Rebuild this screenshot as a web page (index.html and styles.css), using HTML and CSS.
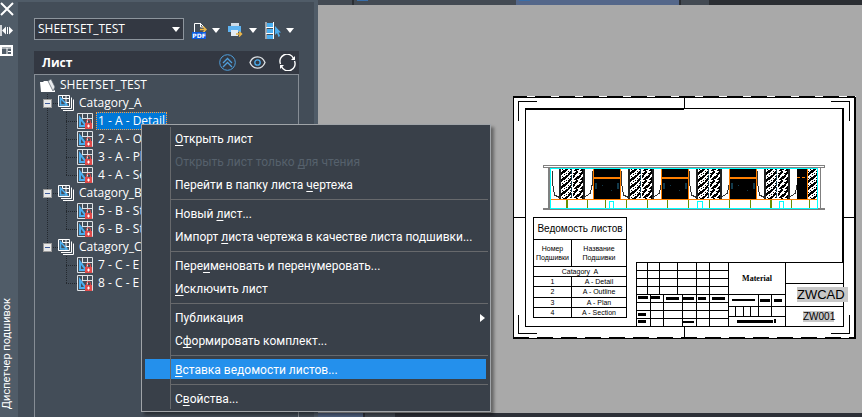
FILE: index.html
```html
<!DOCTYPE html>
<html lang="ru">
<head>
<meta charset="utf-8">
<title>Диспетчер подшивок</title>
<link rel="stylesheet" href="styles.css">
</head>
<body>
<svg class="defs" width="0" height="0" aria-hidden="true">
  <defs>
    <symbol id="i-sheet" viewBox="0 0 16 16">
      <path d="M.5.5h15v15H.5zM5.500.5v6M10.500.5v9M4 5.500h11.500" fill="none" stroke="#dfe3e6"/>
      <path d="M1 1h3l1 5 4 5v4H1z" fill="#434d58"/>
      <path d="M2 2l9 12H2zM4 8v4h3z" fill="#4aaef0" fill-rule="evenodd"/>
      <path d="M9.500 10V8.500a2 2 0 0 1 4 0V10" fill="none" stroke="#e04a4a"/>
      <path d="M8 10h7v6H8z" fill="#e04a4a"/>
      <path d="M11 11.500h1v3h-1zM10 12.500h3v1h-3z" fill="#fff"/>
    </symbol>
    <symbol id="i-group" viewBox="0 0 16 16">
      <path d="M.5.5h11v11H.5z" fill="none" stroke="#fff"/>
      <path d="M4.500.5v3h7M8 1v10M5 3.500h7M7 7.500h5" fill="none" stroke="#fff"/>
      <path d="M2.500 3v7h6.500z" fill="#434d58" stroke="#4aaef0" stroke-width="1.500"/>
      <path d="M13.500 2.500v11H3M15.500 4.500v11H5" fill="none" stroke="#fff"/>
    </symbol>
  </defs>
</svg>
<div class="app">
  <aside class="rail">
    <button aria-label="Закрыть"><svg width="14" height="14" viewBox="0 0 14 14"><path d="M1 1l12 12M13 1L1 13" stroke="#fff" stroke-width="2"/></svg></button>
    <button aria-label="Скрывать"><svg width="13" height="11" viewBox="0 0 13 11"><path d="M1 0v11" stroke="#fff" stroke-width="1.500"/><path d="M2 5.500l4-4v8zM13 5.500l-4-4v8z" fill="#fff"/><path d="M7.500 2v7" stroke="#fff"/></svg></button>
    <button aria-label="Свойства палитры"><svg width="13" height="11" viewBox="0 0 13 11"><path d="M1 1h11v9H1z" fill="none" stroke="#fff" stroke-width="2"/><path d="M2 3h9M7 3v7M8 6.500h4" stroke="#fff"/></svg></button>
    <span class="rail-title">Диспетчер подшивок</span>
  </aside>
  <section class="panel">
    <div class="toolbar">
      <label class="combo"><select aria-label="Подшивка"><option>SHEETSET_TEST</option></select><i class="caret"></i></label>
      <button aria-label="PDF"><svg width="15" height="17" viewBox="0 0 15 17"><path d="M2.500 10V1.500h6L12 5v1M8.500 1v4H12M12.500 9v2" fill="none" stroke="#fff"/><path d="M8 7.500h5M11 4.500l3 3-3 3" fill="none" stroke="#e8b54a" stroke-width="1.500"/><path d="M0 10h14v7H0z" fill="#0a5ae0"/><text x="7" y="16" text-anchor="middle" class="pdf">PDF</text></svg><i class="caret"></i></button>
      <button aria-label="Печать"><svg width="16" height="16" viewBox="0 0 16 16"><path d="M3 1h8v4H3z" fill="#cfdbe6"/><path d="M0 4h13v6H0z" fill="#5fb4f2"/><path d="M3 8h7v6H3z" fill="#e3ebf2"/><path d="M8 12h5M11 9.500l2.500 2.500L11 14.500" fill="none" stroke="#e8b54a" stroke-width="1.500"/></svg><i class="caret"></i></button>
      <button aria-label="Выбор листов"><svg width="16" height="17" viewBox="0 0 16 17"><path d="M2 1h6v4H2zM2 7h6v4H2zM2 13h6v4H2z" fill="#4aaef0"/><path d="M1 0v17M8.500 0v17M1 5.500h8M1 11.500h8" stroke="#fff"/><path d="M10 4v9l2-2 1.500 4 1.500-1-1.500-3.500H16z" fill="#4aaef0"/></svg><i class="caret"></i></button>
    </div>
    <header class="head">
      <h1>Лист</h1>
      <button aria-label="Свернуть"><svg width="17" height="17" viewBox="0 0 17 17"><g fill="none" stroke="#4f9fdc"><circle cx="8.500" cy="8.500" r="7.800"/><path d="M4 9l4.500-4.500L13 9M4 13l4.500-4.500L13 13" stroke-width="1.300"/></g></svg></button>
      <button aria-label="Просмотр"><svg width="17" height="13" viewBox="0 0 17 13"><path d="M1 6.500C4-1 13-1 16 6.500 13 14 4 14 1 6.500z" fill="none" stroke="#dfe3e6" stroke-width="1.300"/><circle cx="8.500" cy="6.500" r="2.700" fill="none" stroke="#4aaef0" stroke-width="1.300"/></svg></button>
      <button aria-label="Обновить"><svg width="17" height="17" viewBox="0 0 17 17"><path d="M1.500 10A7 7 0 0 1 14.500 4.500M15.500 7A7 7 0 0 1 2.500 12.500" fill="none" stroke="#fff" stroke-width="1.400"/><path d="M16 2v4h-4zM1 15v-4h4z" fill="#fff"/></svg></button>
    </header>
    <div class="tree">
      <div class="row root"><svg width="15" height="13" viewBox="0 0 15 13"><path d="M0 3h3l1-1h5l6 10v1H1z" fill="#fff"/><path d="M8 2l3-2 4 8-2 4z" fill="#e8eaec" stroke="#555f69" stroke-width=".7"/></svg><span>SHEETSET_TEST</span></div>
      <ul class="groups">
        <li class="group">
          <div class="row"><button class="toggle" aria-label="Свернуть группу"></button><svg class="gi"><use href="#i-group"/></svg><span>Catagory_A</span></div>
          <ul class="sheets">
            <li class="row"><svg class="si"><use href="#i-sheet"/></svg><span class="selected">1 - A - Detail</span></li>
            <li class="row"><svg class="si"><use href="#i-sheet"/></svg><span>2 - A - Outline</span></li>
            <li class="row"><svg class="si"><use href="#i-sheet"/></svg><span>3 - A - Plan</span></li>
            <li class="row"><svg class="si"><use href="#i-sheet"/></svg><span>4 - A - Section</span></li>
          </ul>
        </li>
        <li class="group">
          <div class="row"><button class="toggle" aria-label="Свернуть группу"></button><svg class="gi"><use href="#i-group"/></svg><span>Catagory_B</span></div>
          <ul class="sheets">
            <li class="row"><svg class="si"><use href="#i-sheet"/></svg><span>5 - B - St</span></li>
            <li class="row"><svg class="si"><use href="#i-sheet"/></svg><span>6 - B - St</span></li>
          </ul>
        </li>
        <li class="group">
          <div class="row"><button class="toggle" aria-label="Свернуть группу"></button><svg class="gi"><use href="#i-group"/></svg><span>Catagory_C</span></div>
          <ul class="sheets">
            <li class="row"><svg class="si"><use href="#i-sheet"/></svg><span>7 - C - E</span></li>
            <li class="row"><svg class="si"><use href="#i-sheet"/></svg><span>8 - C - E</span></li>
          </ul>
        </li>
      </ul>
    </div>
  </section>
  <main class="work">
    <div class="tabs"><i class="tab first"></i><i class="tab doc"></i><i class="tab doc active"></i><i class="tab add"></i></div>
    <div class="canvas">
      <div class="sheet">
        <svg class="drawing" viewBox="513 96 343 243" shape-rendering="crispEdges">
          <defs>
            <pattern id="hatch" width="8" height="7" patternUnits="userSpaceOnUse">
              <path d="M-1 8L9-1M-5 4L3-3M5 11L13 4" stroke="#000" stroke-width="2.200"/>
              <path d="M0 3h1v1H0zM4 6h1v1H4zM6 5h1v1H6zM2 1h1v1H2z" fill="#000"/>
            </pattern>
            <pattern id="hatch2" width="6" height="9" patternUnits="userSpaceOnUse">
              <path d="M-1 8L7-1M-2 14L10 2" stroke="#000" stroke-width="2"/>
              <path d="M1 2h2v1H1zM4 8h1v1H4z" fill="#000"/>
            </pattern>
            <g id="panel">
              <path d="M0 169h11v30H0z" fill="url(#hatch)"/><path d="M13 169h10v30H13z" fill="url(#hatch2)"/>
              <path d="M0 169v30M24 169v30" stroke="#222" stroke-width="2"/>
              <path d="M11.500 169v30" stroke="#123a4c" stroke-dasharray="5 1"/>
              <path d="M-7.500 171v12l2 12 6 3M32.500 171v12l-2 10-7 5" fill="none" stroke="#333"/>
            </g>
            <g id="door">
              <path d="M0 169h27v30H0z"/>
              <path d="M0 178h27" stroke="#ff7f00" stroke-width="2"/><path d="M.5 169v30M27.500 169v30" stroke="#ff7f00"/>
              <path d="M2 183h2v6H2zM24 183h2v6h-2zM9 185h1v1H9zM18 190h1v1h-1z" fill="#123a4c"/>
            </g>
          </defs>
          <path d="M513 96h343v243H513z" fill="#fff"/>
          <g fill="none" stroke="#000">
            <path d="M513.500 97v241M513 97.500h342M513 338.500h342"/>
            <path d="M511 96.500h344M513 337.500h341" stroke-dasharray="16 8"/>
            <path d="M855 97v242M843 108v154" stroke-width="2"/>
            <path d="M525.500 108v218M525 108.500h317M525 326.500h319M843.500 262v64"/>
            <path d="M525 109.500h159"/>
            <path d="M518.500 121v-19.500H537M831 101.500h18.500V121M518.500 315v18.500H537M831 333.500h18.500V315"/>
            <path d="M684.500 97v12M684.500 326v12M513 217.500h12"/>
            <path d="M844 217.500h10"/>
          </g>
          <path d="M543.500 165.500h281v2h-281z" fill="#fff" stroke="#808080"/>
          <path d="M549 168v41M543 209h282" stroke="#808080" stroke-width="2"/>
          <path d="M820.500 168v40" stroke="#808080"/>
          <path d="M551 169h267v39H551z" fill="#fff"/>
          <use href="#panel" x="560"/><use href="#panel" x="629"/><use href="#panel" x="697"/><use href="#panel" x="765"/>
          <use href="#door" x="593"/><use href="#door" x="661"/><use href="#door" x="729"/>
          <path d="M797 169h10v30h-10z"/><path d="M808 169h9v30h-9z" fill="url(#hatch)"/>
          <path d="M797 177.500h10" stroke="#ff7f00" stroke-dasharray="3 2"/><path d="M807.500 169v30" stroke="#ff7f00"/>
          <path d="M551 199.500h267" stroke="#ff7f00"/>
          <path d="M551 168.500h267M551 208.500h267M550.500 168v41M817.500 168v41M609.500 208v-6.500h4v6.500M697.500 208v-6.500h5v6.500M779.500 208v-6.500h4v6.500" fill="none" stroke="#0ff"/>
          <path d="M587.500 200v8M605.500 200v8M626.500 200v8M647.500 200v8M667.500 200v8M688.500 200v8M709.500 200v8M729.500 200v8M750.500 200v8M791.500 200v8M809.500 200v8" stroke="#6b8e00"/>
          <path d="M567 200v8M771 200v8" stroke="#6b8e00" stroke-width="2"/>
          <g fill="none" stroke="#000">
            <path d="M636.500 262v64M636 262.500h208M636 270.500h92M636 278.500h92M636 286.500h92M636 294.500h149M636 302.500h92M636 310.500h92M636 318.500h92"/>
            <path d="M647.500 262v32M659.500 262v32M677.500 262v32M650.500 294v32M663.500 294v32M682.500 294v32M696.500 262v64M709.500 262v64M728.500 262v64M785.500 262v64"/>
            <path d="M785 283.500h58M728 306.500h115M728 316.500h57M758.500 294v22M771.500 294v22M735.500 306v10M743.500 306v10M750.500 306v10"/>
          </g>
          <path d="M638 296h10v3h-10zM651 296h9v3h-9zM666 297h13v3h-13zM638 313h8v3h-8zM638 320h8v3h-8zM683 297h11v3h-11zM698 297h8v3h-8zM712 297h13v3h-13zM683 321h11v2h-11zM732 299h23v2h-23zM760 299h10v3h-10zM774 299h8v3h-8zM737 320h36v3h-36zM774 319h2v4h-2z"/>
          <path d="M797 287h51v15h-51zM803 311h31v11h-31z" fill="#c8c8c8"/>
          <text x="757" y="281" class="material" text-anchor="middle">Material</text>
          <text x="797" y="299" class="brand">ZWCAD</text>
          <text x="803" y="320" class="code">ZW001</text>
        </svg>
        <table class="index">
          <colgroup><col class="num"><col></colgroup>
          <tr class="t"><th colspan="2">Ведомость листов</th></tr>
          <tr class="h"><th>Номер<br>Подшивки</th><th>Название<br>Подшивки</th></tr>
          <tr><td colspan="2">Catagory&nbsp; A</td></tr>
          <tr><td>1</td><td>A - Detail</td></tr>
          <tr><td>2</td><td>A - Outline</td></tr>
          <tr><td>3</td><td>A - Plan</td></tr>
          <tr><td>4</td><td>A - Section</td></tr>
        </table>
      </div>
    </div>
    <div class="status"><i class="model"></i><i class="layout"></i></div>
  </main>
  <ul class="menu">
    <li><button><u>О</u>ткрыть лист</button></li>
    <li><button disabled>Открыть лист только <u>д</u>ля чтения</button></li>
    <li><button>Перейти в папку листа <u>ч</u>ертежа</button></li>
    <li class="sep"></li>
    <li><button>Новый <u>л</u>ист...</button></li>
    <li><button>Импорт <u>л</u>иста чертежа в качестве листа подшивки...</button></li>
    <li class="sep"></li>
    <li><button>Пере<u>и</u>меновать и перенумеровать...</button></li>
    <li><button><u>И</u>сключить лист</button></li>
    <li class="sep"></li>
    <li><button class="sub">Публикация</button></li>
    <li><button>С<u>ф</u>ормировать комплект...</button></li>
    <li class="sep"></li>
    <li><button class="current"><u>В</u>ставка ведомости листов...</button></li>
    <li class="sep"></li>
    <li><button>С<u>в</u>ойства...</button></li>
  </ul>
</div>
</body>
</html>
```
FILE: styles.css
```css
* { box-sizing: border-box; }
body { margin: 0; font: 12px/18px "Open Sans", "Noto Sans", sans-serif; color: #fff; background: #a9a9a9; }
ul { list-style: none; margin: 0; padding: 0; }
button { font: inherit; color: inherit; background: none; border: 0; padding: 0; display: flex; align-items: center; }
svg { display: block; flex: none; }
.defs { position: absolute; }
.app { position: relative; display: flex; min-height: 100vh; overflow: hidden; }

.rail { width: 18px; background: #505c68; display: flex; flex-direction: column; gap: 9px; padding: 2px 0 8px; }
.rail-title { margin-top: auto; width: 14px; line-height: 14px; writing-mode: vertical-rl; transform: rotate(180deg); font-family: Roboto, sans-serif; white-space: nowrap; font-size: 11px; }

.panel { width: 300px; border: solid #505c68; border-width: 2px 4px 0 0; background: #434d58; padding: 16px 15px 0 16px; display: flex; flex-direction: column; }
.toolbar { display: flex; align-items: center; gap: 8px; height: 22px; margin-bottom: 11px; }
.toolbar button { gap: 5px; padding-top: 2px; }
.caret { border: solid transparent; border-width: 5px 4px 0; border-top-color: #fff; }
.combo { position: relative; width: 150px; }
.combo select { appearance: none; width: 100%; height: 22px; padding: 0 3px; border: 1px solid #8d959d; border-radius: 0; background: #333842; color: #fff; font: inherit; }
.combo .caret { position: absolute; right: 4px; top: 9px; }
.pdf { font: bold 6px "DejaVu Sans", sans-serif; fill: #fff; }

.head { display: flex; align-items: center; gap: 13px; height: 23px; padding: 0 3px 0 8px; background: #333842; }
.head h1 { margin: 0 auto 0 0; font-size: 12px; line-height: 18px; }
.tree { flex: 1; border: solid #868d95; border-width: 1px 1px 0; padding-top: 1px; }
.row { display: flex; align-items: center; height: 18px; white-space: nowrap; }
.row span { padding: 0 2px; line-height: 18px; }
.root { padding-left: 5px; gap: 3px; }
.groups { position: relative; }
.groups::before { content: ""; position: absolute; left: 12px; top: 0; bottom: 45px; border-left: 1px dotted #23282e; }
.group > .row { position: relative; padding-left: 8px; }
.group > .row::before { content: ""; width: 15px; border-top: 1px dotted #23282e; }
.toggle { position: absolute; left: 8px; top: 5px; width: 9px; height: 9px; background: linear-gradient(#3d5a99, #3d5a99) center / 5px 1px no-repeat #e8e8e8; border: 1px solid #9a9a9a; }
.gi, .si { width: 16px; height: 16px; }
.group > .row span { margin-left: 3px; }
.sheets { position: relative; padding-left: 31px; }
.sheets::before { content: ""; position: absolute; left: 31px; top: 0; bottom: 9px; border-left: 1px dotted #23282e; }
.sheets .row::before { content: ""; width: 11px; border-top: 1px dotted #23282e; }
.sheets .row span { margin-left: 3px; }
.row .selected { background: #0078d7; outline: 1px dotted #ff9a3c; outline-offset: -1px; }

.work { flex: 1; display: flex; flex-direction: column; background: #a9a9a9; }
.tabs { display: flex; gap: 2px; height: 5px; background: #2b2e33; }
.tab { background: #434a53; }
.first { width: 34px; }
.doc { width: 162px; background: linear-gradient(#3a6ea8, #3a6ea8) 3px 0 / 11px 1px no-repeat #434a53; }
.active { width: 163px; background-color: #54678a; margin-left: -2px; }
.add { width: 28px; }
.canvas { flex: 1; display: flex; justify-content: flex-end; align-items: flex-start; padding: 91px 6px 0 0; }
.sheet { position: relative; width: 343px; color: #000; }
.drawing { width: 100%; height: auto; }
.material { font: bold 8px "Liberation Serif", serif; }
.brand { font: 13px "Liberation Sans", sans-serif; }
.code { font: 10px "Liberation Sans", sans-serif; }
.index { position: absolute; left: 20px; top: 121px; width: 94px; height: 101px; border-collapse: collapse; table-layout: fixed; background: #fff; font: 7px/9px "Liberation Sans", sans-serif; text-align: center; }
.index .num { width: 38px; }
.index th, .index td { border: 1px solid #000; padding: 0; height: 10px; font-weight: normal; white-space: nowrap; }
.index .t th { height: 22px; font-size: 10px; }
.index .h th { height: 26px; }
.status { display: flex; gap: 2px; height: 4px; background: #2d3037; }
.model { width: 45px; background: #4d5f7d; }
.layout { width: 30px; background: #434a53; }

.menu { position: absolute; left: 141px; top: 124px; width: 350px; padding: 3px 2px 0 3px; border: 1px solid #a0a4a8; background: #394049; box-shadow: 3px 3px 3px #0006; font-family: Roboto, sans-serif; }
.menu::before { content: ""; position: absolute; left: 28px; top: 2px; bottom: 2px; border-left: 1px solid #67696c; }
.menu button { width: 341px; height: 20px; margin-bottom: 3px; padding: 2px 0 0 30px; white-space: pre; }
.menu button:disabled { color: #56616c; }
.menu u { text-underline-offset: 2px; }
.menu .current { background: linear-gradient(#67696c, #67696c) 25px 0 / 1px 100% no-repeat #2490ec; }
.sep { height: 6px; margin-left: 25px; background: linear-gradient(#67696c, #67696c) 0 2px / 100% 1px no-repeat; }
.sub::after { content: ""; margin-left: auto; margin-right: 1px; border: solid transparent; border-width: 4px 0 4px 5px; border-left-color: #fff; }
```
